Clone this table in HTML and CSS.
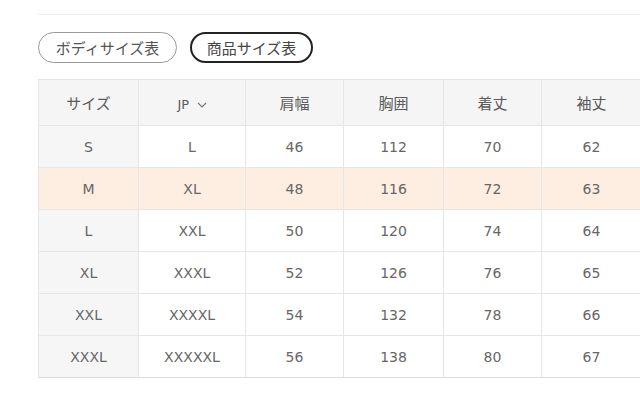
FILE: index.html
```html
<!DOCTYPE html>
<html lang="ja">
<head>
<meta charset="utf-8">
<link rel="stylesheet" href="styles.css">
</head>
<body>
<div class="page">
  <div class="rule"></div>
  <div class="tabs">
    <button class="pill">ボディサイズ表</button>
    <button class="pill active">商品サイズ表</button>
  </div>
  <div class="table-wrap">
    <table class="size">
      <colgroup>
        <col class="c1"><col class="c2"><col class="c3"><col class="c4"><col class="c5"><col class="c6">
      </colgroup>
      <thead>
        <tr><th>サイズ</th><th><span class="latin">JP</span> <svg class="chev" width="10" height="6" viewBox="0 0 10 6"><path d="M1 1l4 4 4-4" fill="none" stroke="#777" stroke-width="1.2"/></svg></th><th>肩幅</th><th>胸囲</th><th>着丈</th><th>袖丈</th></tr>
      </thead>
      <tbody>
        <tr><td>S</td><td>L</td><td>46</td><td>112</td><td>70</td><td>62</td></tr>
        <tr class="hl"><td>M</td><td>XL</td><td>48</td><td>116</td><td>72</td><td>63</td></tr>
        <tr><td>L</td><td>XXL</td><td>50</td><td>120</td><td>74</td><td>64</td></tr>
        <tr><td>XL</td><td>XXXL</td><td>52</td><td>126</td><td>76</td><td>65</td></tr>
        <tr><td>XXL</td><td>XXXXL</td><td>54</td><td>132</td><td>78</td><td>66</td></tr>
        <tr><td>XXXL</td><td>XXXXXL</td><td>56</td><td>138</td><td>80</td><td>67</td></tr>
      </tbody>
    </table>
  </div>
</div>
</body>
</html>
```
FILE: styles.css
```css
* { box-sizing: border-box; }
html, body { margin: 0; padding: 0; background: #fff; }
body {
  font-family: "Noto Sans CJK JP", "Noto Sans", sans-serif;
  color: #555;
  width: 640px;
  height: 405px;
  overflow: hidden;
}
.page { padding-left: 38px; padding-top: 14px; }
.rule { height: 1px; background: #ececec; }
.tabs { display: flex; gap: 13px; margin-top: 17px; }
.pill {
  font-family: inherit;
  font-size: 15px;
  color: #555;
  background: #fff;
  border: 1px solid #9a9a9a;
  border-radius: 16px;
  height: 31px;
  padding: 0;
  line-height: 1;
  width: 139px;
}
.pill.active { border: 2px solid #222; width: 123px; color: #444; }
.table-wrap { margin-top: 16px; width: 602px; overflow: hidden; }
.size {
  border-collapse: collapse;
  width: 603px;
  table-layout: fixed;
  font-family: "DejaVu Sans", "Noto Sans CJK JP", sans-serif;
  font-size: 14px;
  color: #666;
}
.c1 { width: 100px; } .c2 { width: 107px; } .c3 { width: 98px; }
.c4 { width: 100px; } .c5 { width: 98px; } .c6 { width: 100px; }
.size th, .size td {
  border: 1px solid #e6e6e6;
  text-align: center;
  font-weight: normal;
  padding: 0;
}
.size th {
  height: 46px;
  background: #f5f5f5;
  color: #5a5a5a;
  font-family: "Noto Sans CJK JP", sans-serif;
  font-size: 15px;
}
.size th .latin { font-family: "DejaVu Sans", sans-serif; font-size: 13px; }
.size td { height: 42px; background: #fff; }
.size td:first-child { background: #f6f6f7; }
.size tr.hl td { background: #fdeee1; }
.size tbody tr:last-child td { border-bottom-color: #ddd; }
.chev { margin-left: 4px; vertical-align: middle; }
```
